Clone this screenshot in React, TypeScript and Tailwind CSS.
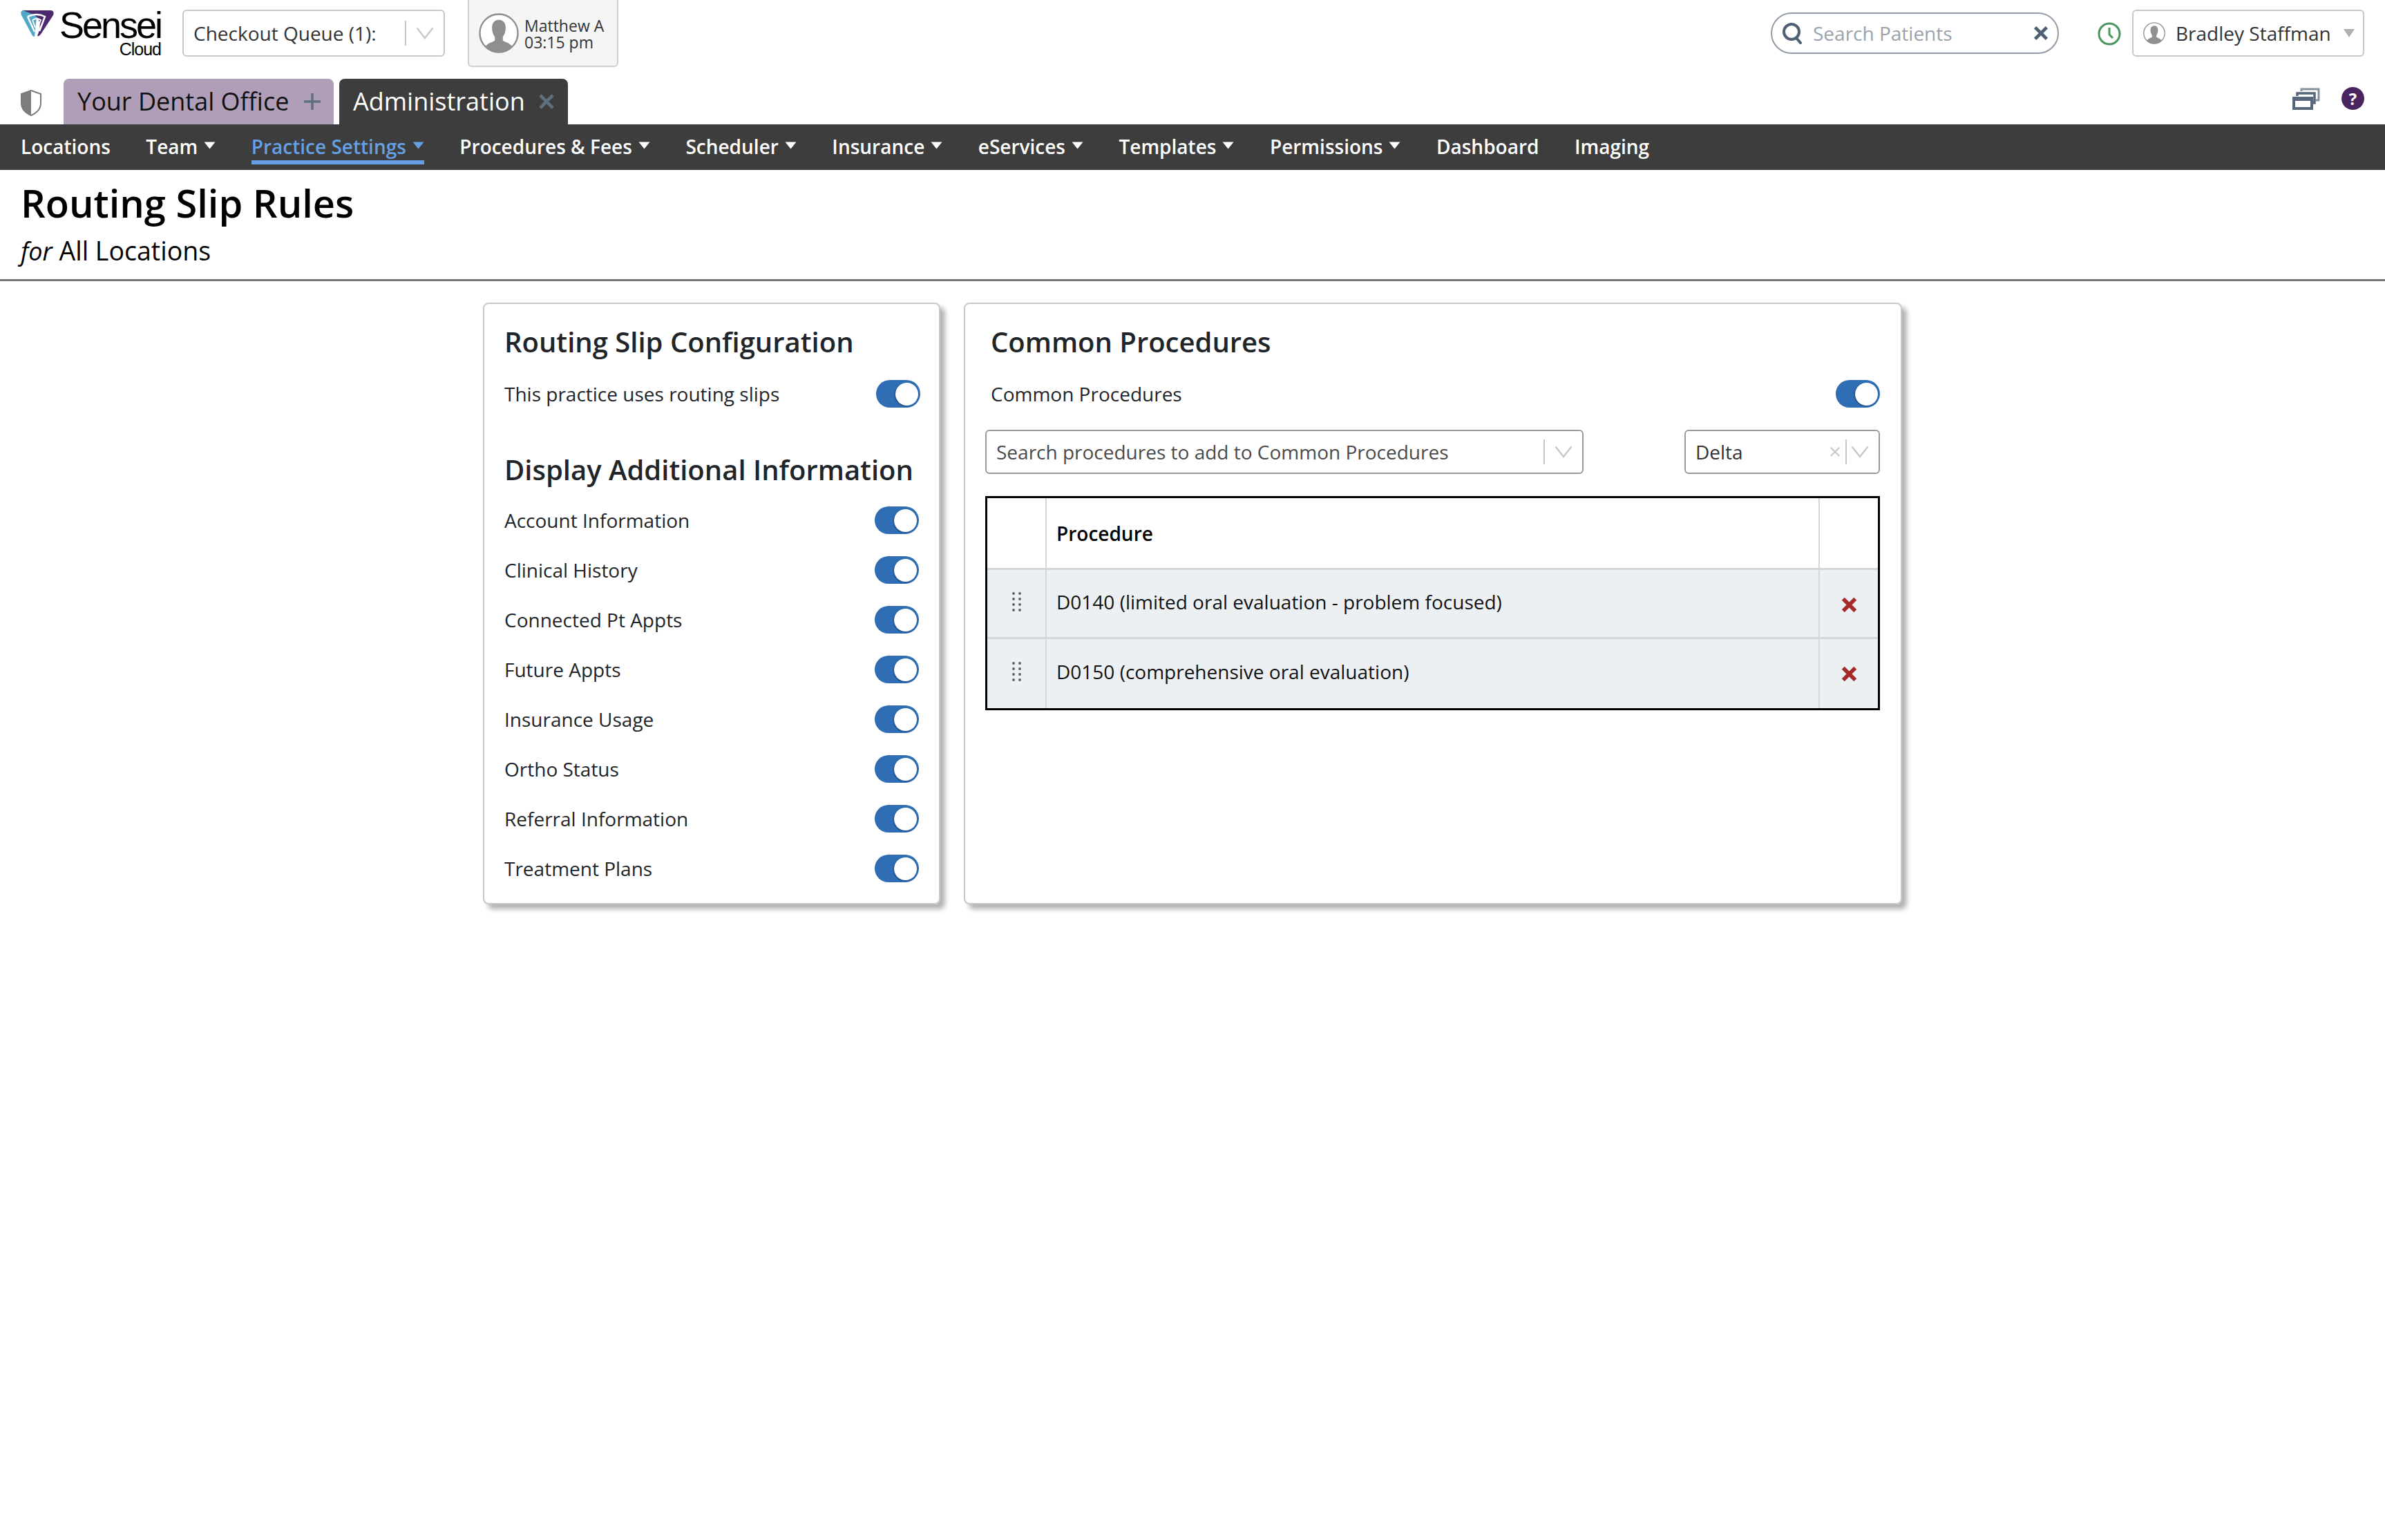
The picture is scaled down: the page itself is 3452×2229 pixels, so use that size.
const navItems = [
  { label: "Locations" },
  { label: "Team", menu: true },
  { label: "Practice Settings", menu: true, active: true },
  { label: "Procedures & Fees", menu: true },
  { label: "Scheduler", menu: true },
  { label: "Insurance", menu: true },
  { label: "eServices", menu: true },
  { label: "Templates", menu: true },
  { label: "Permissions", menu: true },
  { label: "Dashboard" },
  { label: "Imaging" },
];

const displayRows = [
  "Account Information",
  "Clinical History",
  "Connected Pt Appts",
  "Future Appts",
  "Insurance Usage",
  "Ortho Status",
  "Referral Information",
  "Treatment Plans",
];

const procedures = [
  "D0140 (limited oral evaluation - problem focused)",
  "D0150 (comprehensive oral evaluation)",
];

const Logo = () => (
  <svg width="48" height="38" viewBox="0 0 48 38" className="shrink-0">
    <path d="M3 0 H24 L20 38 Q17 38 15 33 L1 7 Q-1 1 3 0 Z" fill="#4fa8c6" />
    <path d="M3 0 H44 Q49 1 47 7 L30 33 Q27 38 24 37 Q33 16 20 7 Q12 3 3 0 Z" fill="#4d2a6e" />
    <path d="M10 9 Q23 3 35 9 L27 30" fill="none" stroke="#fff" strokeWidth="2.5" />
    <path d="M10 9 L20 31" fill="none" stroke="#fff" strokeWidth="2.5" />
    <path d="M17 14 Q23 10 29 14 L25 24 M17 14 L21 25" fill="none" stroke="#fff" strokeWidth="2" />
  </svg>
);

const Avatar = ({ size }: { size: number }) => (
  <svg width={size} height={size} viewBox="0 0 60 60" className="shrink-0">
    <circle cx="30" cy="30" r="28.5" fill="#fff" stroke="#8f8f8f" strokeWidth="2.5" />
    <path
      d="M30 10 C22 10 19 17 20 24 C20 30 23 33 24 36 L24 41 C19 44 13 45 10 50 C15 56 23 58.5 30 58.5 C37 58.5 45 56 50 50 C47 45 41 44 36 41 L36 36 C37 33 40 30 40 24 C41 17 38 10 30 10 Z"
      fill="#8f8f8f"
    />
  </svg>
);

const Chevron = ({ className }: { className: string }) => (
  <svg viewBox="0 0 26 18" fill="none" className={className}>
    <path d="M1.5 1.5 L13 16 L24.5 1.5" stroke="#c8c8c8" strokeWidth="2.5" />
  </svg>
);

const Caret = ({ color }: { color: string }) => (
  <svg width="17" height="11" viewBox="0 0 17 11" className="ml-[9px] mb-[4px] shrink-0">
    <path d="M0.5 0.5 H16.5 L8.5 10.5 Z" fill={color} />
  </svg>
);

const CrossIcon = ({ size, color, width }: { size: number; color: string; width: number }) => (
  <svg width={size} height={size} viewBox="0 0 20 20" className="shrink-0">
    <path d="M3 3 L17 17 M17 3 L3 17" stroke={color} strokeWidth={width} fill="none" />
  </svg>
);

const Toggle = ({ className = "" }: { className?: string }) => (
  <div className={`flex h-[40px] w-[64px] shrink-0 items-center justify-end rounded-full bg-[#2f6db5] pr-[3px] ${className}`}>
    <div className="h-[33px] w-[33px] rounded-full bg-white shadow-[-1px_1px_2px_rgba(0,0,0,0.35)]" />
  </div>
);

const GripDots = () => (
  <div className="grid grid-cols-2 gap-x-[5px] gap-y-[4px]">
    {Array.from({ length: 8 }).map((_, i) => (
      <span key={i} className="h-[4px] w-[4px] rounded-full bg-[#5b6470]" />
    ))}
  </div>
);

const SelectDivider = () => <span className="h-[36px] w-[2px] bg-[#c8c8c8]" />;

const TopBar = () => (
  <div className="flex h-[114px] items-start">
    <div className="ml-[30px] mt-[15px] flex w-[203px] shrink-0 flex-col">
      <div className="flex h-[44px] items-start">
        <Logo />
        <span className="ml-[8px] font-['Liberation_Sans',sans-serif] text-[54px] leading-[42px] tracking-[-3px] text-black">
          Sensei
        </span>
      </div>
      <span className="self-end font-['Liberation_Sans',sans-serif] text-[25px] leading-[24px] tracking-[-1px] text-black">
        Cloud
      </span>
    </div>
    <div className="ml-[31px] mt-[14px] flex h-[68px] w-[380px] items-center rounded-[6px] border-2 border-[#c8c8c8] pl-[14px] pr-[14px] text-[28px] text-[#333]">
      <span className="flex-1">Checkout Queue (1):</span>
      <SelectDivider />
      <Chevron className="ml-[14px] h-[18px] w-[26px]" />
    </div>
    <div className="ml-[33px] flex h-[97px] w-[218px] items-center gap-[8px] rounded-b-[6px] border-2 border-t-0 border-[#cfcfcf] bg-[#f5f5f5] pl-[14px] text-[23px] leading-[24px] text-[#333]">
      <Avatar size={58} />
      <div className="pt-[2px]">
        <div>Matthew A</div>
        <div>03:15 pm</div>
      </div>
    </div>
    <div className="ml-auto mt-[18px] flex h-[60px] w-[417px] items-center rounded-full border-2 border-[#929ca8] pl-[14px] pr-[12px]">
      <svg width="30" height="32" viewBox="0 0 30 32" fill="none" className="shrink-0">
        <circle cx="14" cy="14" r="11" stroke="#4f6072" strokeWidth="4" />
        <path d="M21 23 L27 30" stroke="#4f6072" strokeWidth="4" strokeLinecap="round" />
      </svg>
      <span className="ml-[15px] flex-1 text-[28px] text-[#9aa3ad]">Search Patients</span>
      <CrossIcon size={24} color="#4f6072" width={4} />
    </div>
    <svg width="34" height="34" viewBox="0 0 34 34" fill="none" className="ml-[56px] mt-[32px] shrink-0">
      <circle cx="17" cy="17" r="15" stroke="#4a9460" strokeWidth="3" />
      <path d="M17 8 V18 L22 23" stroke="#4a9460" strokeWidth="3" />
    </svg>
    <div className="ml-[16px] mr-[30px] mt-[14px] flex h-[68px] w-[336px] items-center rounded-[6px] border-2 border-[#c8c8c8] pl-[14px] text-[28px] text-[#333]">
      <Avatar size={32} />
      <span className="ml-[15px]">Bradley Staffman</span>
      <svg width="16" height="12" viewBox="0 0 16 12" className="ml-[18px] shrink-0">
        <path d="M0 0 H16 L8 12 Z" fill="#b0b0b0" />
      </svg>
    </div>
  </div>
);

const TabBar = () => (
  <div className="flex h-[66px] items-start">
    <svg width="32" height="38" viewBox="0 0 32 38" className="ml-[29px] mt-[16px] shrink-0">
      <path d="M16 1 L30 6 V19 C30 28 23 34 16 37 C9 34 2 28 2 19 V6 Z" fill="#fff" stroke="#7d7d7d" strokeWidth="2" />
      <path d="M16 1 L2 6 V19 C2 28 9 34 16 37 Z" fill="#7d7d7d" />
    </svg>
    <div className="ml-[31px] flex h-[66px] w-[391px] items-center rounded-t-[8px] bg-[#b09eb8] pl-[20px] pr-[18px] text-[36px] text-[#111]">
      <span className="flex-1">Your Dental Office</span>
      <svg width="26" height="26" viewBox="0 0 26 26" className="shrink-0">
        <path d="M13 1 V25 M1 13 H25" stroke="#5f6f80" strokeWidth="3.5" />
      </svg>
    </div>
    <div className="ml-[8px] flex h-[66px] w-[331px] items-center rounded-t-[8px] bg-[#3d3d3d] pl-[20px] pr-[18px] text-[36px] text-white">
      <span className="flex-1">Administration</span>
      <CrossIcon size={26} color="#5f6f80" width={3.5} />
    </div>
    <div className="ml-auto mr-[30px] mt-[12px] flex items-center gap-[31px]">
      <svg width="40" height="32" viewBox="0 0 40 32" fill="none">
        <path d="M13 5 V2 H38 V18 H34" stroke="#8492a0" strokeWidth="3" />
        <path d="M7 12 V8 H32 V22 H28" stroke="#56677a" strokeWidth="3.5" />
        <rect x="2" y="15" width="26" height="15" fill="#fff" stroke="#56677a" strokeWidth="4" />
        <rect x="2" y="14" width="26" height="5" fill="#56677a" />
      </svg>
      <div className="flex h-[33px] w-[33px] items-center justify-center rounded-full bg-[#4a2460] text-[24px] font-bold leading-none text-white">
        ?
      </div>
    </div>
  </div>
);

const NavBar = () => (
  <div className="flex h-[66px] items-center gap-[51.5px] bg-[#3d3d3d] pl-[30px] text-[28px] font-semibold text-white">
    {navItems.map((item) => (
      <div
        key={item.label}
        className={`flex h-[50px] items-center border-b-[6px] pt-[4px] ${
          item.active ? "border-[#66a0e4] text-[#66a0e4]" : "border-transparent"
        }`}
      >
        <span>{item.label}</span>
        {item.menu && <Caret color={item.active ? "#66a0e4" : "#ffffff"} />}
      </div>
    ))}
  </div>
);

const PageHeader = () => (
  <div className="flex h-[161px] flex-col border-b-[3px] border-[#777] pl-[30px] text-black">
    <h1 className="mt-[11px] text-[56px] font-semibold leading-[72px]">Routing Slip Rules</h1>
    <div className="mt-[9px] text-[37.5px] font-medium leading-[50px]">
      <em className="text-[36px] font-normal">for</em> All Locations
    </div>
  </div>
);

const RowLabel = ({ children }: { children: string }) => (
  <span className="text-[28px] text-[#212529]">{children}</span>
);

const ConfigCard = () => (
  <div className="flex w-[662px] flex-col rounded-[8px] border-2 border-[#c8c8c8] pb-[14px] pl-[29px] pr-[29px] pt-[19px] shadow-[7px_7px_7px_rgba(0,0,0,0.3)]">
    <h2 className="flex h-[75px] items-center pb-[3px] text-[40px] font-semibold text-[#212529]">Routing Slip Configuration</h2>
    <div className="flex h-[72px] items-center justify-between">
      <RowLabel>This practice uses routing slips</RowLabel>
      <Toggle className="-mr-[2px]" />
    </div>
    <h2 className="flex h-[111px] items-center pt-[36px] text-[40px] font-semibold text-[#212529]">
      Display Additional Information
    </h2>
    {displayRows.map((row) => (
      <div key={row} className="flex h-[72px] items-center justify-between">
        <RowLabel>{row}</RowLabel>
        <Toggle />
      </div>
    ))}
  </div>
);

const ProceduresCard = () => (
  <div className="flex w-[1358px] flex-col rounded-[8px] border-2 border-[#c8c8c8] pl-[29px] pr-[30px] pt-[19px] shadow-[7px_7px_7px_rgba(0,0,0,0.3)]">
    <h2 className="flex h-[75px] items-center pb-[3px] pl-[8px] text-[40px] font-semibold text-[#212529]">Common Procedures</h2>
    <div className="flex h-[72px] items-center justify-between pl-[8px]">
      <RowLabel>Common Procedures</RowLabel>
      <Toggle />
    </div>
    <div className="mt-[16px] flex h-[64px] justify-between">
      <div className="flex w-[866px] items-center rounded-[6px] border-2 border-[#9a9a9a] pl-[14px] pr-[14px] text-[28px] text-[#4a4a4a]">
        <span className="flex-1">Search procedures to add to Common Procedures</span>
        <SelectDivider />
        <Chevron className="ml-[14px] h-[18px] w-[26px]" />
      </div>
      <div className="flex w-[283px] items-center rounded-[6px] border-2 border-[#9a9a9a] pl-[14px] pr-[14px] text-[28px] text-[#333]">
        <span className="flex-1">Delta</span>
        <CrossIcon size={18} color="#c8c8c8" width={2.5} />
        <span className="mx-[6px] h-[36px] w-[2px] bg-[#c8c8c8]" />
        <Chevron className="h-[18px] w-[26px]" />
      </div>
    </div>
    <div className="mt-[32px] border-[3px] border-black">
      <div className="grid h-[104px] grid-cols-[86px_1fr_84px] border-b-[3px] border-[#d4d7da] text-[28px] font-semibold text-black">
        <div className="border-r-2 border-[#d4d7da]" />
        <div className="flex items-center border-r-2 border-[#d4d7da] pl-[14px]">Procedure</div>
        <div />
      </div>
      {procedures.map((proc, i) => (
        <div
          key={proc}
          className={`grid h-[100px] grid-cols-[86px_1fr_84px] bg-[#edf0f3] text-[28px] text-[#111] ${
            i === 0 ? "border-b-[3px] border-[#d4d7da]" : ""
          }`}
        >
          <div className="flex items-center justify-center border-r-2 border-[#d4d7da] pb-[6px]">
            <GripDots />
          </div>
          <div className="flex items-center border-r-2 border-[#d4d7da] pb-[6px] pl-[14px]">{proc}</div>
          <div className={`flex items-center justify-center ${i === 0 ? "pt-[4px]" : ""}`}>
            <CrossIcon size={25} color="#a52a2a" width={4.5} />
          </div>
        </div>
      ))}
    </div>
  </div>
);

export default function App() {
  return (
    <div className="min-h-[2229px] bg-white font-['Open_Sans',sans-serif]">
      <TopBar />
      <TabBar />
      <NavBar />
      <PageHeader />
      <div className="flex items-stretch gap-[34px] pl-[699px] pt-[31px]">
        <ConfigCard />
        <ProceduresCard />
      </div>
    </div>
  );
}
